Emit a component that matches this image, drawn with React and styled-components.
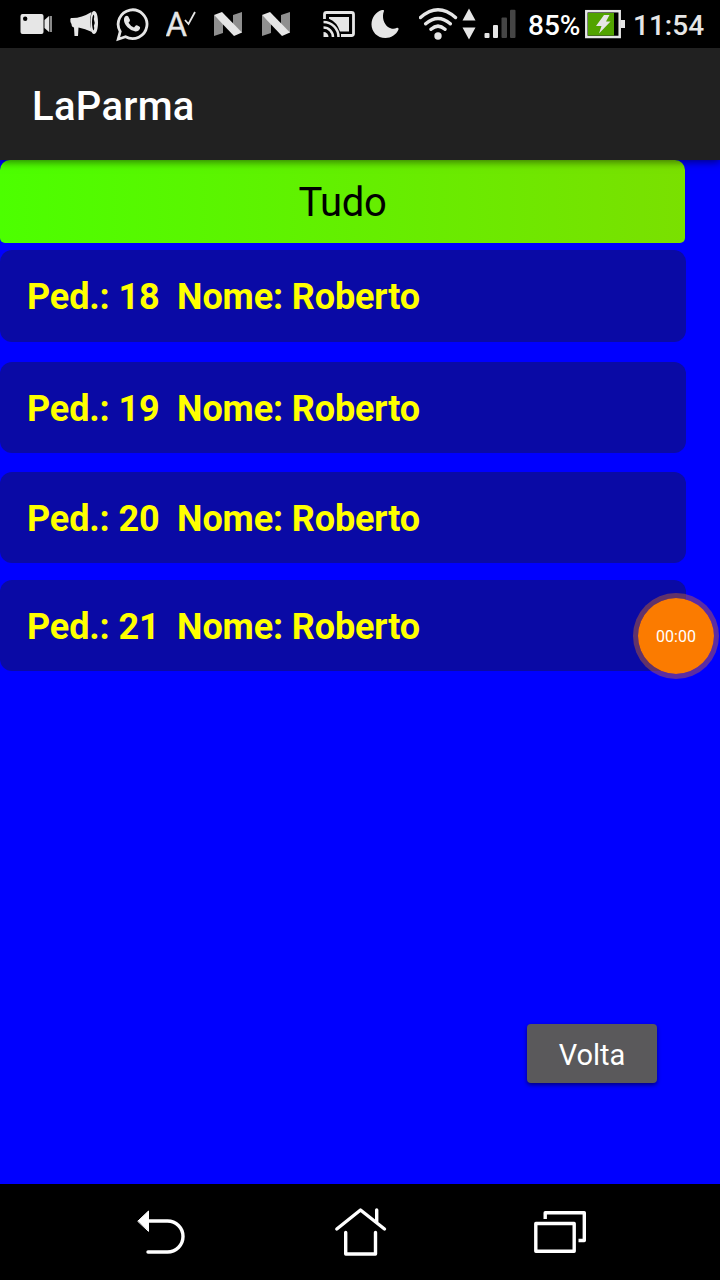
import React from "react";
import styled, { createGlobalStyle } from "styled-components";

const GlobalStyle = createGlobalStyle`
  * {
    box-sizing: border-box;
  }

  body {
    margin: 0;
    background: #000;
    font-family: Roboto, sans-serif;
  }
`;

const Screen = styled.div`
  position: relative;
  display: flex;
  flex-direction: column;
  width: 720px;
  height: 1280px;
  overflow: hidden;
  background: #0000ff;
`;

const StatusBar = styled.div`
  display: flex;
  align-items: center;
  flex: none;
  height: 48px;
  background: #000;
  color: #e6e6e6;
`;

const StatusIcon = styled.svg`
  display: block;
  flex: none;
  height: 48px;
  margin-left: ${({ $gap }) => $gap}px;
  fill: #e6e6e6;
`;

const StatusText = styled.span`
  flex: none;
  width: ${({ $width }) => $width}px;
  margin-left: ${({ $gap }) => $gap}px;
  padding-top: 3px;
  color: ${({ $color }) => $color || "#e6e6e6"};
  font-size: ${({ $size }) => $size}px;
  font-weight: 500;
  line-height: 45px;
  white-space: nowrap;
`;

const AppBar = styled.header`
  position: relative;
  z-index: 1;
  display: flex;
  align-items: center;
  flex: none;
  height: 112px;
  padding: 5px 32px 0;
  background: #212121;
  box-shadow: 0 2px 8px rgba(0, 0, 0, 0.5);
`;

const Title = styled.h1`
  margin: 0;
  color: #fff;
  font-size: 40px;
  font-weight: 500;
  letter-spacing: 0.3px;
`;

const Content = styled.main`
  display: flex;
  flex-direction: column;
  flex: 1;
`;

const AllButton = styled.button`
  width: 685px;
  height: 83px;
  padding: 2px 0 0;
  border: 0;
  border-radius: 10px 10px 5px 5px;
  background: linear-gradient(90deg, #4cff00, #7ae000);
  color: #000;
  font-family: inherit;
  font-size: 40px;
  letter-spacing: -0.3px;
`;

const OrderList = styled.ul`
  margin: 0;
  padding: 0;
  list-style: none;
`;

const OrderRow = styled.li`
  display: flex;
  align-items: center;
  width: 686px;
  height: ${({ $height }) => $height}px;
  margin-top: ${({ $gap }) => $gap}px;
  padding: 2px 0 0 27px;
  border-radius: 12px;
  background: #0a0aa5;
  color: #ffff00;
  font-size: 36px;
  font-weight: 700;
  letter-spacing: -0.13px;
  white-space: pre;
`;

const BackButton = styled.button`
  align-self: flex-end;
  width: 130px;
  height: 59px;
  margin: auto 63px 101px 0;
  padding: 3px 0 0;
  border: 0;
  border-radius: 4px;
  background: #5a595b;
  box-shadow: 0 2px 4px rgba(0, 0, 0, 0.5);
  color: #fff;
  font-family: inherit;
  font-size: 29px;
`;

/* Recorder bubble floating over the list */
const RecordBubble = styled.div`
  position: absolute;
  top: 593px;
  left: 633px;
  display: flex;
  align-items: center;
  justify-content: center;
  width: 86px;
  height: 86px;
  border: 5px solid rgba(255, 124, 0, 0.36);
  border-radius: 50%;
  background: #fb7b00;
  background-clip: padding-box;
  color: #fff;
  font-size: 16px;
`;

const NavBar = styled.nav`
  display: flex;
  align-items: center;
  flex: none;
  height: 96px;
  padding-left: 134px;
  background: #000;
`;

const NavIcon = styled.svg`
  flex: none;
  margin-left: ${({ $gap }) => $gap || 0}px;
  fill: none;
  stroke: #fff;
  stroke-width: 3.4;
  stroke-linecap: round;
  stroke-linejoin: round;
`;

const orders = [
  { id: 18, name: "Roberto", gap: 7, height: 92 },
  { id: 19, name: "Roberto", gap: 20, height: 91 },
  { id: 20, name: "Roberto", gap: 19, height: 91 },
  { id: 21, name: "Roberto", gap: 17, height: 91 },
];

const NougatIcon = ({ gap }) => (
  <StatusIcon $gap={gap} width="28" viewBox="0 0 28 48">
    <path d="M0 15L9 23V33L0 36ZM28 12V33L19 25V15Z" fill="#8f8f8f" />
    <path d="M0 15L8 12L28 32.500L20 36Z" />
  </StatusIcon>
);

const Status = () => (
  <StatusBar>
    <StatusIcon $gap={20} width="32" viewBox="20 0 32 48">
      <path
        fillRule="evenodd"
        d="M22.500 14H41.500Q43.500 14 43.500 16V32Q43.500 34 41.500 34H22.500Q20.500 34 20.500 32V16Q20.500 14 22.500 14ZM25.200 16.500A2.200 2.200 0 1 0 25.200 20.900A2.200 2.200 0 1 0 25.200 16.500Z"
      />
      <path d="M44.500 20L49 16V32L44.500 28Z" />
      <path d="M49.500 16H52V32H49.500Z" fill="#8a8a8a" />
    </StatusIcon>
    <StatusIcon $gap={18} width="29" viewBox="70 0 29 48">
      <path d="M71 18Q81 18.500 91.500 12Q88.500 22 92 32Q85 28.500 78.500 27.500L78 36H74.500L74 27.500Q71.500 27 71.500 24Q70 22 70.300 19Z" />
      <path
        fillRule="evenodd"
        d="M94 11C96.800 11 98 16.500 98 22.500S96.800 34 94 34S90.500 28.500 90.500 22.500S91.500 11 94 11ZM93.500 14.500C92.500 16 92 19 92 22.500S92.800 29.500 93.500 30.500C94.500 29.500 94.300 27 93.800 26Q95.500 22.500 93.800 19C94.300 18 94.500 15.500 93.500 14.500Z"
      />
    </StatusIcon>
    <StatusIcon $gap={17} width="33" viewBox="116 0 33 48">
      <path
        d="M120.200 31.500A14.400 14.400 0 1 1 125.500 36.700L118.200 39.200Z"
        fill="none"
        stroke="#e6e6e6"
        strokeWidth="2.800"
      />
      <path d="M125 16.500Q127 14.800 128.300 16.500L130 20Q130.200 21 128.500 22.800Q130.500 26.300 134 27.500L136 25.300Q136.600 24.900 139.300 26.500Q140.500 27 140 28.500Q138.800 31.500 135.500 31.500Q131 31 127.500 27.300Q123.500 23 124 19Q124.100 17.500 125 16.500Z" />
    </StatusIcon>
    <StatusIcon $gap={17} width="30" viewBox="166 0 30 48">
      <text x="165.500" y="36" fontSize="33" stroke="#e6e6e6" strokeWidth="0.300">A</text>
      <path d="M185 20L188.500 24L195 12" fill="none" stroke="#e6e6e6" strokeWidth="1.800" />
    </StatusIcon>
    <NougatIcon gap={18} />
    <NougatIcon gap={20} />
    <StatusIcon $gap={33} width="32" viewBox="323 0 32 48">
      <path
        d="M324.500 19V14.500Q324.500 12.500 326.500 12.500H351.500Q353.500 12.500 353.500 14.500V33.500Q353.500 35.500 351.500 35.500H341"
        fill="none"
        stroke="#e6e6e6"
        strokeWidth="2.800"
      />
      <path d="M329 17H349V31.500H340Q337 22 329 18.800Z" />
      <path d="M323.500 32A5 5 0 0 1 328.500 37H323.500Z" />
      <path
        d="M323.500 27.500A9.500 9.500 0 0 1 333 37M323.500 22A15 15 0 0 1 338.500 37"
        fill="none"
        stroke="#e6e6e6"
        strokeWidth="2.500"
      />
    </StatusIcon>
    <StatusIcon $gap={16} width="29" viewBox="371 0 29 48">
      <path d="M382 10Q384.500 9.500 384 11C381.500 17 384 24 388 27C391 29 394 29.500 397 27.800Q399 27.500 398.500 29.500C396 35 391 38 385.500 38C377 38 371.500 31.500 371.500 24.500C371.500 17.500 376 11.500 382 10Z" />
    </StatusIcon>
    <StatusIcon $gap={19} width="39" viewBox="419 0 39 48">
      <path
        d="M420.500 17.500Q438 2 455.500 17.500M425.700 23.800Q438 13 450.300 23.800M431 29.300Q438 23 445 29.300"
        fill="none"
        stroke="#e6e6e6"
        strokeWidth="3.400"
        strokeLinecap="round"
      />
      <circle cx="438" cy="36" r="3.700" />
    </StatusIcon>
    <StatusIcon $gap={4} width="14" viewBox="462 0 14 48">
      <path d="M469 8.500L475.500 20.500H462.500ZM462.500 27.500H475.500L469 39.500Z" />
    </StatusIcon>
    <StatusIcon $gap={8} width="32" viewBox="484 0 32 48">
      <rect x="484.500" y="33" width="5" height="5" rx="1" />
      <rect x="493" y="25" width="5" height="13" rx="1" />
      <rect x="501.500" y="17.500" width="5.500" height="20.500" rx="1" fill="#454545" />
      <rect x="510" y="9.700" width="5.500" height="28.300" rx="1" fill="#454545" />
    </StatusIcon>
    <StatusText $gap={12} $width={57} $size={28} $color="#fff">85%</StatusText>
    <StatusIcon $gap={0} width="41" viewBox="585 0 41 48">
      <rect x="586.300" y="11.200" width="33.400" height="25.800" fill="#000" stroke="#e6e6e6" strokeWidth="2.500" />
      <rect x="588" y="13" width="26" height="22.500" fill="#52a300" />
      <path d="M621 20H625V28H621Z" />
      <path d="M604 15H609.500L606 21.500H610.500L599 33.500L601.500 26H596Z" />
    </StatusIcon>
    <StatusText $gap={7} $width={80} $size={28}>11:54</StatusText>
  </StatusBar>
);

const Navigation = () => (
  <NavBar>
    <NavIcon width="52" height="96" viewBox="134 1184 52 96">
      <path d="M148 1221H167.500A15.500 15.500 0 0 1 167.500 1252H148" />
      <path d="M138 1221L148.500 1211V1231Z" fill="#fff" strokeWidth="1" />
    </NavIcon>
    <NavIcon $gap={148} width="54" height="96" viewBox="334 1184 54 96">
      <path d="M336.800 1229L360.500 1210L384.500 1229M376.700 1210V1222M345.700 1232.500V1254H375.500V1232.500" />
    </NavIcon>
    <NavIcon $gap={144} width="56" height="96" viewBox="532 1184 56 96">
      <path
        d="M535.800 1223.500H574.200V1251.300H535.800ZM545.200 1219V1212.800H584.300V1240.500H578.500"
        strokeLinecap="butt"
      />
    </NavIcon>
  </NavBar>
);

const App = () => {
  return (
    <>
      <GlobalStyle />
      <Screen>
        <Status />
        <AppBar>
          <Title>LaParma</Title>
        </AppBar>
        <Content>
          <AllButton>Tudo</AllButton>
          <OrderList>
            {orders.map((order) => (
              <OrderRow key={order.id} $gap={order.gap} $height={order.height}>
                {`Ped.: ${order.id}  Nome: ${order.name}`}
              </OrderRow>
            ))}
          </OrderList>
          <BackButton>Volta</BackButton>
        </Content>
        <Navigation />
        <RecordBubble>00:00</RecordBubble>
      </Screen>
    </>
  );
};

export default App;
